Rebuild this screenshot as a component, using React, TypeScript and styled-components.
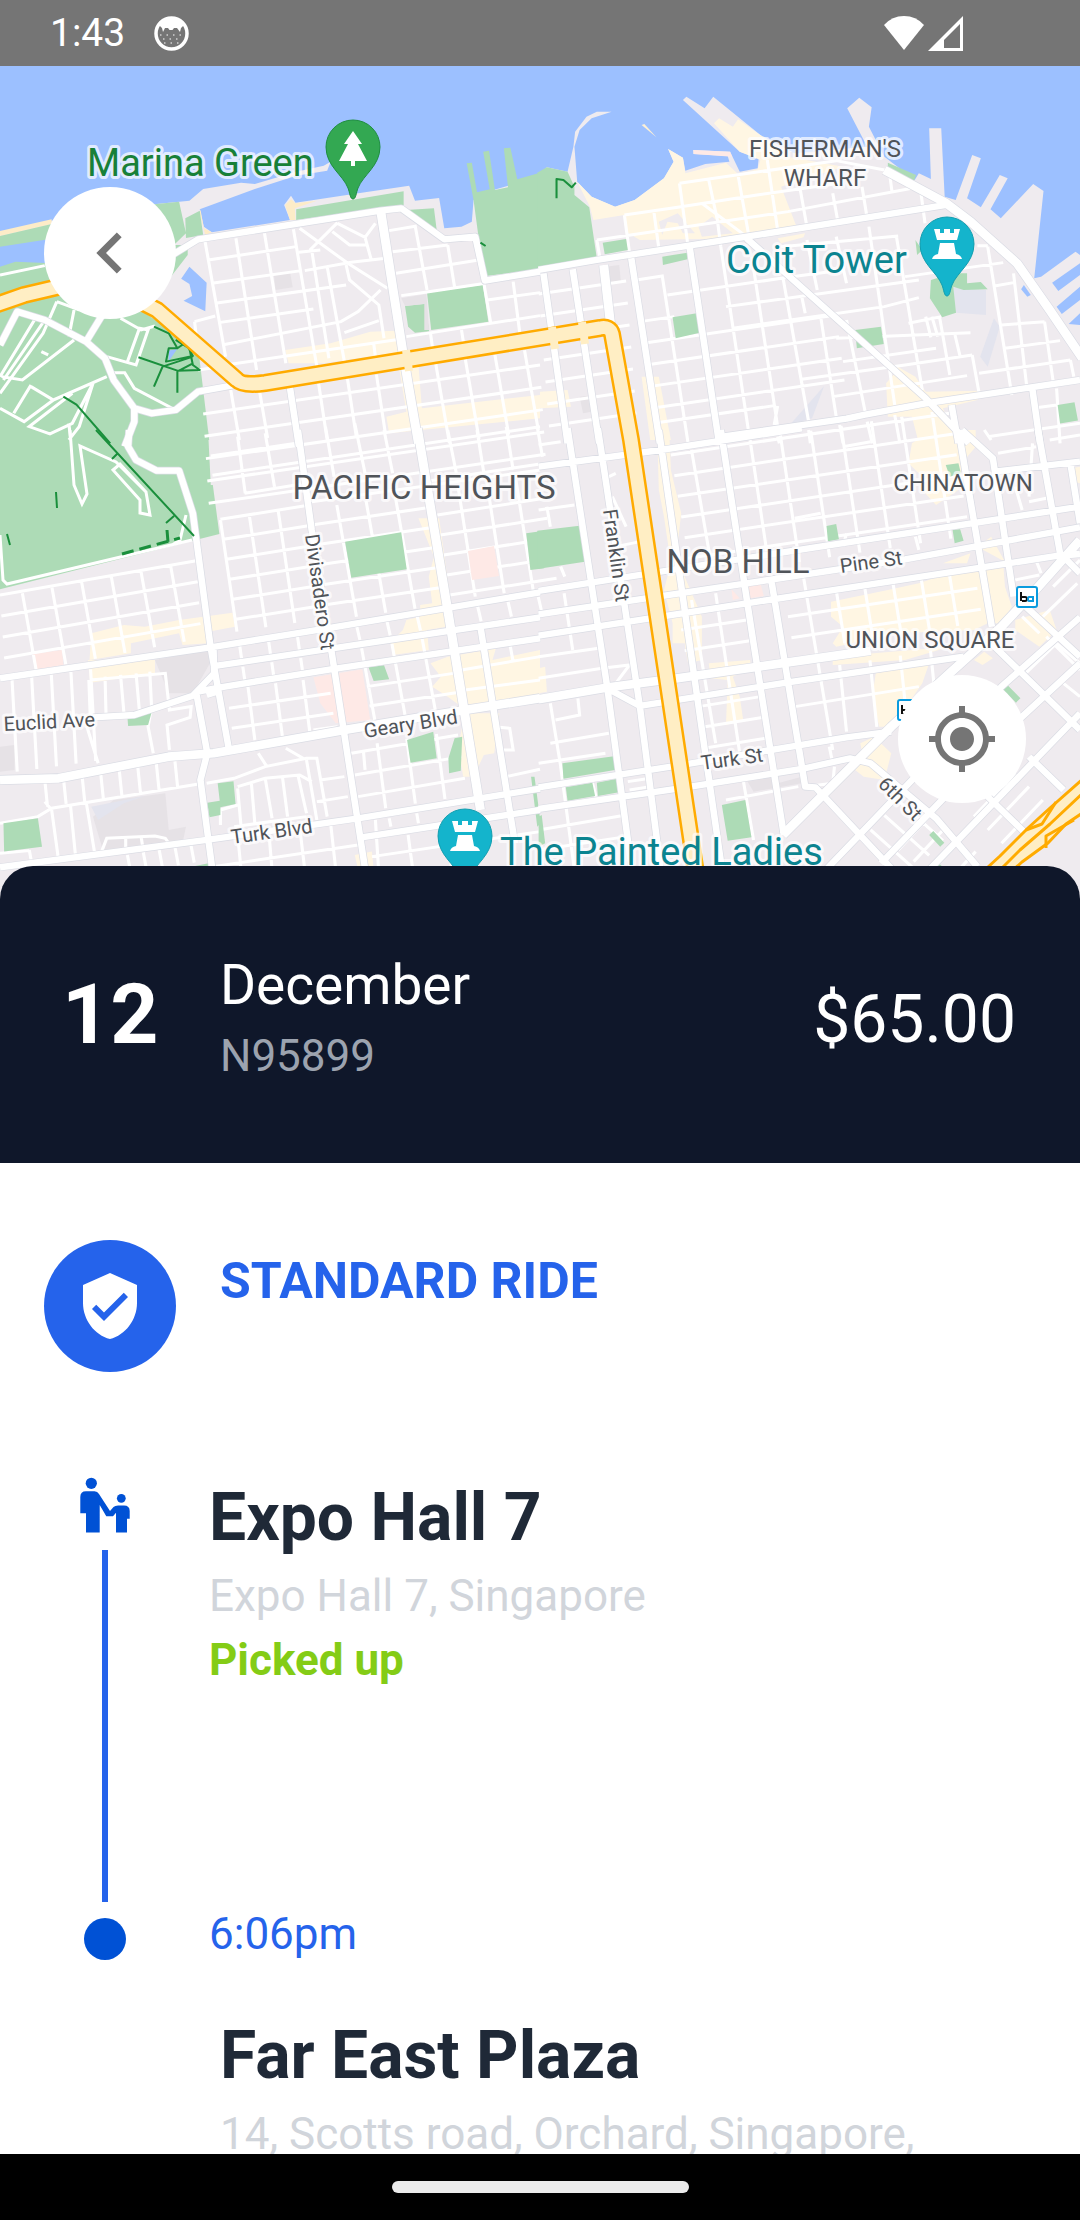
import React from "react";
import styled, { createGlobalStyle } from "styled-components";
import { MdChevronLeft, MdMyLocation, MdVerifiedUser } from "react-icons/md";

const color = {
  navy: "#0f172a",
  blue: "#2563eb",
  marker: "#0051d5",
  ink: "#1f2937",
  muted: "#d1d5db",
  reference: "#9ca3af",
  lime: "#84cc16",
  icon: "#757575",
};

const GlobalStyle = createGlobalStyle`
  *, *::before, *::after { box-sizing: border-box; }
  body { margin: 0; background: #fff; font-family: Roboto, "Noto Sans", sans-serif; }
  h1, h2, p, ol { margin: 0; padding: 0; }
`;

/* ---------- layout ---------- */

const Screen = styled.div`
  display: grid;
  grid-template-rows: auto minmax(0, 1fr) auto;
  height: 100vh;
  overflow: hidden;
`;

const StatusBar = styled.header`
  display: flex;
  align-items: center;
  justify-content: space-between;
  height: 66px;
  padding: 0 116px 0 50px;
  background: ${color.icon};
  color: #fff;
  font-size: 39px;
`;

const StatusGroup = styled.div<{ $gap: number }>`
  display: flex;
  align-items: center;
  gap: ${(p) => p.$gap}px;
`;

const Content = styled.main`
  overflow-y: auto;
  scrollbar-width: none;
`;

const MapPanel = styled.section`
  position: relative;
  aspect-ratio: 1080 / 834;
  overflow: hidden;
  background: #9cc0ff;
`;

const MapDrawing = styled.svg`
  display: block;
  width: 100%;
  height: 100%;
`;

const RoundButton = styled.button<{ $size: number }>`
  position: absolute;
  display: grid;
  place-items: center;
  width: ${(p) => p.$size}px;
  height: ${(p) => p.$size}px;
  padding: 0;
  border: 0;
  border-radius: 50%;
  background: #fff;
  color: ${color.icon};
  cursor: pointer;
`;

const BackButton = styled(RoundButton)`
  top: 121px;
  left: 44px;
`;

const LocateButton = styled(RoundButton)`
  right: 54px;
  bottom: 97px;
`;

const Summary = styled.section`
  position: relative;
  display: flex;
  align-items: flex-start;
  margin-top: -34px;
  padding: 81px 64px 70px 62px;
  border-radius: 33px 33px 0 0;
  background: ${color.navy};
  color: #fff;
`;

const Day = styled.p`
  width: 158px;
  font-size: 84px;
  font-weight: 700;
  line-height: 136px;
`;

const Month = styled.h1`
  font-size: 55px;
  font-weight: 400;
  line-height: 77px;
`;

const Reference = styled.p`
  color: ${color.reference};
  font-size: 44px;
  line-height: 64px;
`;

const Price = styled.p`
  margin-left: auto;
  font-size: 66px;
  line-height: 146px;
`;

const Ride = styled.section`
  display: flex;
  gap: 44px;
  padding: 77px 44px 100px;
`;

const RideBadge = styled.div`
  display: grid;
  place-items: center;
  width: 132px;
  height: 132px;
  border-radius: 50%;
  background: ${color.blue};
  color: #fff;
`;

const RideName = styled.h2`
  color: ${color.blue};
  font-size: 50px;
  font-weight: 700;
  line-height: 82px;
`;

const Timeline = styled.ol`
  list-style: none;
`;

const Stop = styled.li<{ $minHeight?: number }>`
  display: grid;
  grid-template-columns: 66px 1fr;
  gap: 71px;
  min-height: ${(p) => p.$minHeight ?? 0}px;
  padding: 0 44px 0 72px;
`;

const Rail = styled.div`
  display: flex;
  flex-direction: column;
  align-items: center;
  gap: 12px;
  color: ${color.marker};
`;

const RailLine = styled.span`
  flex: 1;
  width: 6px;
  background: ${color.blue};
`;

const RailDot = styled.span`
  width: 42px;
  height: 42px;
  margin-top: 16px;
  border-radius: 50%;
  background: ${color.marker};
`;

const PlaceName = styled.h2`
  color: ${color.ink};
  font-size: 66px;
  font-weight: 700;
  line-height: 92px;
`;

const Line = styled.p<{ $color: string; $bold?: boolean }>`
  color: ${(p) => p.$color};
  font-size: 44px;
  font-weight: ${(p) => (p.$bold ? 700 : 400)};
  line-height: 64px;
`;

const Destination = styled.section`
  padding: 44px 44px 66px 220px;
`;

const NavigationBar = styled.footer`
  display: grid;
  place-items: center;
  height: 66px;
  background: #000;
`;

const HomeHandle = styled.span`
  width: 297px;
  height: 12px;
  border-radius: 6px;
  background: #ebebeb;
`;

/* ---------- map ---------- */

type Segment = [number, number, number, number];

/* Evenly spaced parallel streets, the first at `s`, each next one shifted by (dx, dy). */
const run = (s: Segment, dx: number, dy: number, n: number) =>
  Array.from({ length: n }, (_, i) => {
    const [a, b, c, d] = s;
    return `M${a + dx * i} ${b + dy * i}L${c + dx * i} ${d + dy * i}`;
  }).join("");

interface Area {
  fill: string;
  d: string;
}

interface Tile {
  x: number;
  y: number;
  areas: Area[];
  minor: string;
  major: string;
  wide: string;
  trails?: string;
  /* City squares interrupt the street grid, so they are painted over it. */
  squares?: string;
}

const LAND = "#efebef";
const PARK = "#addbb6";
const SHOP = "#fff6e3";
const CARE = "#fee9e6";
const DIM = "#e6e2e6";
const WATER = "#9cc0ff";

const northWest: Tile = {
  x: 0,
  y: 0,
  areas: [
    {
      fill: LAND,
      d: "M0 700L150 662L455 612L550 602L590 567L700 548L740 552L860 515L940 497L960 485L950 512L860 527L740 567L580 628L592 680L615 697L842 660L825 615L845 587L858 608L1060 577L1188 557L1205 602L1275 594L1290 685L1340 680L1370 665L1375 600L1400 580L1568 530V1400H0Z",
    },
    { fill: "#fdecc8", d: "M0 693L150 658V672L0 708ZM582 628L592 685L615 697L596 706L580 640ZM828 615L845 598L858 610L920 602L856 625L858 660L842 660Z" },
    {
      fill: PARK,
      d: "M0 708L150 672L455 612L520 605L540 700L505 735H545V765L440 905L455 915L575 1040L612 1360H0ZM538 655L580 632L590 705L540 714ZM860 628L1172 574V615L860 660ZM1180 630L1260 625L1268 690L1240 680ZM1355 490L1370 488L1385 577L1422 568L1403 455L1420 452L1437 570L1475 562L1463 445L1482 443L1502 538L1568 518V808L1410 828L1388 700L1375 600ZM1240 878L1402 854L1418 965L1252 990ZM1176 918L1235 911L1246 994L1205 998L1185 980Z",
    },
    { fill: WATER, d: "M0 740L150 716V790L45 785L0 800ZM550 800L600 848L596 934L533 902L558 888L550 852L526 836ZM490 1052L515 1046L490 1084Z" },
    { fill: DIM, d: "M795 822L842 815L850 862L800 870ZM1165 895L1238 882L1246 990H1232V912L1176 918Z" },
    { fill: SHOP, d: "M828 1050L960 1030L1075 995L1150 992L1165 1055L940 1090H838ZM1158 1100L1215 1095L1225 1225L1568 1185V1255L1370 1275L1130 1300L1122 1250L1180 1235Z" },
  ],
  minor:
    "M595 722L655 1070M685 715L745 1110M768 700L830 1090M852 688L920 1100M905 750L955 1075M950 800L1000 1085M870 685L1010 790L1125 865M980 668L900 750M980 670L1060 712L1090 670M965 695L1015 735H1065M1060 712L1078 780M868 757L930 750M1120 775L1020 787L885 812M1005 795L1015 840L1100 915L1115 1015M1105 870L1040 935L990 965L645 1035M1100 962L1000 998M605 780L860 740M615 850L875 812M625 910L1005 855M635 968L910 927M565 965L625 948M565 965L570 1010M1130 692L1210 678M1140 755L1300 735M1150 820L1390 780M1165 887L1240 876L1410 850M1205 675L1240 870M1300 735L1320 862M1405 850L1425 970M1490 845L1510 1005M1415 900L1568 878M1180 1010L1568 947M655 1095L1160 1018M1250 1000L1256 1045M1340 990L1346 1030M1085 1030L1090 1070" +
    run([925, 1150, 950, 1320], 84, -13, 3) +
    run([1265, 1090, 1305, 1330], 86, -13, 4) +
    run([670, 1170, 695, 1320], 82, -6, 2) +
    run([590, 1242, 1568, 1095], 4, 67, 5) +
    "M575 1110L655 1098M0 825L130 797M165 905L125 1000L0 1180M165 905L230 930M215 930L200 1010M130 960L10 1140M100 960L0 1130M5 1130L65 1140L215 1020M120 1055L140 1065M90 1155L40 1240M90 1160L155 1200L310 1130M0 1225L70 1265L155 1200M210 1180L85 1280L145 1302L210 1270L270 1150L230 1280L200 1320M200 1270L205 1320M310 1070L395 1095L430 990L405 985L370 1085M350 955L410 990L450 978M415 930L550 1020M330 1118H362L390 1165L500 1225",
  major:
    "M505 762L575 718L1105 632L1165 625L1290 718L1380 710L1408 842L1568 815M840 1150L868 1340M0 1035L50 935L130 960L250 1025L305 1075L330 1140L390 1225L440 1240L510 1230L575 1175L700 1152M300 940L250 1025M390 1225V1265L362 1340",
  wide: "M1105 630L1175 1090L1215 1330",
  trails:
    "M447 980L490 1000L515 1045L550 1020M515 1045L490 1045L482 1085L560 1068L545 1040M510 1020L550 1045L560 1095L580 1110L515 1112L402 1072M560 1070L472 1100L447 1160M515 1112V1178M520 1112L560 1090M184 1190L222 1214L320 1330M1395 728L1410 738",
};

const northEast: Tile = {
  x: 540,
  y: 0,
  areas: [
    {
      fill: LAND,
      d: "M0 520L20 502L80 515L97 440L102 395L135 350L165 335L208 335L150 355L115 390L100 440L108 545L150 590L218 620L275 600L360 535L388 485L372 447L415 473L422 512L480 492L550 485L545 468L445 462V450L552 455L580 515L632 505L635 475L580 455L415 300L425 290L478 325L503 290L640 405L740 460L950 440L892 325L927 293L963 322L955 380L1000 470L1088 540L1100 520L1135 537L1130 385H1165L1175 590L1207 600L1255 465L1280 475L1240 595L1280 622L1335 525L1358 535L1308 628L1338 655L1432 552L1462 573L1435 835L1455 830L1555 755L1568 765V790L1487 848L1505 873L1568 825V860L1500 920L1515 942L1568 900V940L1535 972L1568 975V1400H0Z",
    },
    { fill: WATER, d: "M1397 868L1405 855L1425 885L1415 890Z" },
    { fill: "#fdf0d6", d: "M295 375L303 372L338 412Z" },
    {
      fill: SHOP,
      d: "M108 545L150 590L218 620L275 600L360 535L388 485L372 447L415 473L422 520L540 488L575 522L632 508L640 480L580 455L505 370L520 355L560 380L575 358L660 420L720 470L880 500L700 560L745 680L600 715L290 720L250 695L245 645L155 660L145 620ZM690 715L770 700L765 712L700 730ZM970 1060L1090 1130L1120 1175L1280 1172L1270 1200L1170 1225L1210 1330H1100L1080 1250L1010 1250L1005 1150L1030 1120ZM295 1130L345 1130L380 1320H320ZM0 1175L80 1170L90 1220L0 1225Z",
    },
    { fill: LAND, d: "M345 665L400 640L450 700H415L400 670L370 665L355 705ZM460 680L500 650L560 700L470 710Z" },
    { fill: CARE, d: "M445 450L552 455L558 470L447 462Z" },
    { fill: PARK, d: "M-8 518L20 502L80 515L100 560V585L143 622L165 775L-8 805ZM1010 488L1092 525L1085 545L1010 508Z" },
    { fill: DIM, d: "M190 800L230 795L235 845L200 850ZM115 1190L140 1187L150 1235L125 1240Z" },
    { fill: "#e3e4ee", d: "M1200 862L1295 870V945L1208 938ZM1318 955L1335 980L1300 1100L1278 1070ZM825 1158L790 1255L725 1275Z" },
  ],
  squares:
    "M182 728L250 717L255 750L188 763ZM355 770L428 758V778L357 795ZM385 952L455 940L464 998L394 1015ZM915 990L990 980L998 1032L920 1045ZM1090 720L1110 750L1095 765ZM1135 840L1200 820L1240 820V850L1280 846L1300 868L1230 870L1200 860L1208 938L1168 952L1132 895ZM1503 1215L1552 1207L1562 1262L1510 1271Z",
  minor:
    "M405 550L860 482L1000 510M245 645L400 622L630 585L880 548M165 720L720 635L1095 562M405 550L430 740M490 540L515 660L525 740M575 525L605 700M660 480L690 690M755 565L775 680M850 580L865 665M935 560L950 655M1015 520L1022 575M1105 570L1118 670M245 645L260 760M330 630L345 745M165 720L175 780M470 610L600 710M1100 570L1165 610M280 840L355 828L430 1330M525 740L605 1290M615 770L690 1280M705 830L780 1265M775 720L805 870M760 890L770 940M815 950L860 1250M860 710L890 850M890 960L945 1240M955 680L1030 1215M1035 710L1110 1170M1120 950L1135 1012M1138 950L1155 1010M1160 950L1190 1125M1205 1005L1220 1070M1255 1065L1275 1180M1300 740L1370 1185M1375 820L1415 1175M1465 965L1490 1145M1540 1080L1550 1130M700 740L1040 708M370 885L720 832L880 810M1060 830L1345 788M540 920L1100 840M560 985L1000 920L1100 893M390 950L290 965M1270 737H1300M1320 858L1375 848M1340 975L1465 965M1350 1045L1510 1022M1275 1120L1540 1080M1070 970L1165 950" +
    run([-4, 882, 250, 843], 5, 66, 7) +
    run([300, 1030, 860, 945], 8, 65, 4) +
    "M860 1015L1250 998M760 1138L1060 1095L1255 1065M850 1190L1240 1127M880 1085L1150 1045M330 1270L680 1217M680 1275L690 1218M1430 1225L1500 1215M1500 1165L1510 1330M690 1310L695 1330M780 1290L785 1330M870 1275L880 1330M950 1265L965 1330M1030 1245L1045 1330",
  major:
    "M-4 810L165 780L600 710L1180 615M10 820L80 1330M95 808L172 1330M435 745L520 1330M265 775L348 1330M530 1310L890 1256L940 1245L1120 1210L1568 1140M1430 1170L1452 1330M1195 1215L1215 1330M600 715L1120 1195L1245 1330",
  wide: "M185 795L205 975M1000 510L1180 610L1250 665L1385 790L1480 930L1575 1075",
  trails: "M48 595V537L68 540L92 562L104 548",
};

const southWest: Tile = {
  x: 0,
  y: 430,
  areas: [
    { fill: LAND, d: "M0 30H1572V1420H0Z" },
    { fill: PARK, d: "M0 0L604 0L612 165H618L637 312L0 478ZM1542 1040H1552L1570 1180L1560 1190ZM560 1310L605 1300V1330H560Z" },
    {
      fill: SHOP,
      d: "M265 610L360 585L420 590L520 570L675 548L682 590L605 605V640L530 645L520 610L380 640V670L260 690ZM255 690L450 690V730L262 758ZM1215 265H1275L1310 520L1295 590L1240 600L1245 660L1140 675L1135 635L1170 600L1180 570L1220 560V525L1255 520L1245 440L1260 380ZM1250 700L1300 680L1360 670L1440 655L1430 690L1568 660V800L1340 830L1300 800L1255 770L1280 740ZM1350 850H1450L1435 970L1405 975L1375 1040H1345L1330 950ZM1030 1275L1080 1265L1085 1320H1040Z",
    },
    { fill: CARE, d: "M96 672L180 660L184 705L105 718ZM910 742L1052 718L1075 870L975 880L930 820Z" },
    { fill: DIM, d: "M450 690L615 655V690L560 790L490 790ZM270 1160L330 1110L480 1090L490 1200L540 1190L530 1240L300 1265ZM0 950L42 945V1020L0 1025Z" },
    { fill: "#e3e4ee", d: "M265 1130L420 1098L360 1120L285 1170Z" },
  ],
  squares:
    "M1002 335L1165 307L1181 418L1020 443ZM1528 310L1580 302V415L1540 420ZM370 862L440 848L430 885L372 888ZM632 1060L678 1054L684 1122L640 1132V1155L608 1162L602 1118L638 1112ZM10 1180L110 1165L122 1250L12 1265ZM1070 712L1115 706L1130 748L1085 753ZM1182 930L1258 905L1268 985L1192 998ZM1320 925L1342 920L1338 1022L1304 1030L1302 985Z",
  minor:
    run([612, 78, 870, 38], 5, 58, 2) +
    "M710 190L890 160M690 20L712 190M770 10L797 170M945 -10L970 140M1030 -20L1060 130M1115 0L1140 130M1300 0L1325 130M1385 0L1405 130M1470 -10L1490 120M1560 -10L1575 80M880 95L1568 -10M1230 155L1568 102M905 215L1568 120" +
    run([640, 268, 900, 225], 9, 60, 6) +
    run([905, 285, 1260, 230], 9, 60, 5) +
    run([1270, 255, 1580, 205], 9, 60, 5) +
    run([640, 270, 688, 605], 84, -13, 3) +
    run([978, 225, 1035, 560], 85, -12, 3) +
    run([1330, 170, 1380, 500], 84, -10, 3) +
    run([0, 495, 570, 392], 4, 63, 4) +
    run([65, 490, 105, 720], 86, -17, 6) +
    run([695, 640, 702, 690], 84, -13, 3) +
    run([1035, 585, 1045, 630], 88, -14, 7) +
    run([705, 710, 712, 760], 84, -13, 3) +
    run([1050, 655, 1090, 880], 88, -14, 3) +
    run([665, 835, 960, 790], 8, 60, 2) +
    run([720, 770, 740, 930], 80, -10, 3) +
    run([1065, 770, 1330, 728], 8, 58, 2) +
    "M1340 720L1568 680M1350 780L1568 750M1480 640L1490 695" +
    run([35, 750, 50, 1025], 57, -8, 5) +
    "M258 750L262 860M305 740L308 860M350 735L360 850M395 730L405 845M435 725L440 830M262 750L480 730L492 840L555 830L552 862L485 885L492 960M440 830L430 890L445 970M245 865L285 1000" +
    run([130, 1050, 138, 1130], 54, -8, 8) +
    "M0 1180L110 1160L150 1135L590 1060M130 1115L150 1140M150 1140L170 1290M205 1130L220 1285M250 1115L275 1270M85 1260L92 1300M0 1270L85 1262M295 1265L310 1225L450 1218L480 1225L490 1240M365 1225V1260M410 1222L415 1255M600 1060L680 1045L770 1010L890 985L920 985L950 1160M750 970L775 1010M830 955L880 985M690 1070L770 1045L870 1035L905 1055M690 1075L700 1190M730 1060L740 1180M770 1045L790 1165M820 1040L835 1160M865 1035L890 1150M890 990L920 1170M640 1185V1140L690 1125M930 1050L1000 1040M920 1115L1010 1100M680 1190L890 1160M910 900L980 890" +
    run([1020, 970, 1330, 915], 10, 65, 4) +
    "M1055 960L1060 1020" +
    run([1095, 940, 1120, 1135], 86, -14, 3) +
    "M1440 960L1490 960L1480 895L1450 892M1470 1040L1568 1018M690 1215L700 1320M780 1200L790 1320M870 1190L885 1320M960 1180L975 1320M620 1310L1040 1245M1090 1170L1100 1330M1130 1165L1135 1190M1210 1150L1215 1180M1080 1280L1568 1205M1185 1215L1200 1330M1310 1240V1330" +
    run([370, 1275, 380, 1330], 46, -8, 5),
  major:
    "M0 745L625 650L950 595L1568 487M625 708L1568 562M575 785L640 772L960 718L1568 625M270 862L390 855L560 797L622 730L620 660M0 1312L600 1230L1040 1165L1568 1076M1050 1222L1568 1140M865 0L905 300L965 680L1062 1330M375 0L372 50L395 90L455 122L520 122L560 250L612 655L665 960M570 790L602 970L582 1050L618 1330M1395 590L1495 1240M600 795L630 785",
  wide: "M0 1050L170 1045L490 980L620 970L1000 900L1350 840L1568 805M1212 -5L1300 540L1395 1140",
};

const southEast: Tile = {
  x: 540,
  y: 430,
  areas: [
    { fill: LAND, d: "M0 30H1580V1420H0Z" },
    {
      fill: SHOP,
      d: "M1080 40L1110 20L1215 0L1265 0V50L1225 100L1215 180L1150 225L1110 180L1120 150L1070 100ZM340 0H375L380 120L410 250L400 340L420 440L470 560V690L430 700L420 640L385 640V580L360 480L380 400L360 260L345 180ZM845 515L1010 480L1100 460L1200 425L1345 400L1350 470L1370 530L1340 580L1300 580L1260 600L1040 610L860 650L850 640L880 590L845 560ZM850 680L1190 650L1060 690L850 705ZM1380 570L1480 540L1500 600L1450 650L1380 600ZM1260 690L1290 665L1315 685L1285 705ZM490 700L610 690L612 710L560 740L580 800L590 870L540 885L545 750L495 745ZM975 730L1130 700L1110 760L1070 820L1020 890H985L965 800ZM930 940L970 920L1020 970L1000 1050L940 1040L915 1020L940 990ZM1270 350L1310 320L1350 395ZM1170 400L1250 370L1240 400ZM-4 715L15 710L20 785L-4 790ZM1545 115L1568 110V160L1548 155Z",
    },
    { fill: CARE, d: "M600 468L640 460L650 498L608 505ZM556 478L580 505L560 510Z" },
    { fill: DIM, d: "M600 1050L680 1040L690 1060L760 1040V1060L620 1085Z" },
  ],
  squares:
    "M-8 302L115 287L130 395L-8 417ZM832 288L860 282L868 328L836 334ZM1178 105L1215 100L1222 130L1190 140ZM1198 300L1220 298L1230 332L1204 340ZM65 1000L220 978L230 1018L68 1046ZM75 1072L152 1058L160 1098L80 1112ZM165 1058L232 1045L238 1085L168 1098ZM528 1125L596 1110L614 1222L545 1232ZM-4 1160L5 1155L15 1240L-4 1250ZM1338 770L1352 760L1395 805L1382 818ZM1130 1215L1142 1203L1174 1238L1162 1250ZM1140 1300L1165 1305V1330H1140Z",
  minor:
    "M-4 45L60 35" +
    run([380, 75, 1190, -50], 10, 62, 6) +
    "M440 60L495 390" +
    run([610, 30, 665, 410], 88, -14, 7) +
    "M440 510L510 940M510 490L580 970M765 440L850 960" +
    run([860, 480, 885, 640], 82, -13, 5) +
    run([870, 705, 890, 905], 88, -14, 4) +
    run([720, 560, 1270, 475], 10, 63, 2) +
    run([410, 600, 600, 570], 10, 62, 2) +
    "M740 830L1100 770" +
    run([460, 830, 640, 800], 10, 62, 3) +
    "M-4 745L180 715L260 705L220 760M-4 680L170 655M30 940L200 910M30 820L65 1040M110 805L115 855L45 870M-4 1000L190 970M60 1010L100 1320M150 1050L165 1110M255 1055L320 1045M260 1080L320 1070M-4 1200L250 1155M-4 1260L250 1220M540 1110L750 1070M590 1050L620 1230M855 1010L850 1060L770 1070M840 950L850 1000M70 490L95 660M60 410L72 440M20 230L30 290M-4 240L100 225M210 200L250 290M220 350L290 335M220 130L180 150M1300 20L1568 -20M1330 70L1440 50M1290 0L1310 30M1380 170L1400 240M1420 215L1470 205M1430 40L1420 200M1480 30L1568 15M1380 450L1450 435M1440 390L1455 430M880 50L960 35M740 265L815 250M880 350L890 310M1090 320L1100 360" +
    "M1400 560L1450 610M1430 545L1475 590M1470 620L1568 720M1450 680L1500 620M1490 470L1568 390M1400 740L1480 660M1460 560L1560 460M1520 760L1568 800M1440 700L1500 640L1568 700" +
    run([1040, 1260, 1130, 1160], 45, 35, 4) +
    run([1260, 1160, 1380, 1030], 40, 40, 4) +
    run([960, 1200, 1090, 1320], 40, -44, 3) +
    "M870 1280L940 1210",
  major:
    "M-4 110L350 60L760 -5M-4 483L780 355L1568 230M1320 125L1568 95M-4 553L600 460L1060 388L1568 292M-4 617L600 520L1500 378L1568 372M290 828L720 757L1230 680M-4 1072L430 1002L890 922L1020 905M-4 1137L400 1076L760 1017L900 985L960 1000L1150 1165L1270 1310M80 -5L195 770L268 1330M168 -5L290 830L352 1330M345 0L530 1330M525 0L620 640L708 1215M670 440L770 1070L800 1072L1020 1315M1215 0L1312 590M1225 0L1315 85L1375 500M1445 -5L1510 370L1568 430M1540 100L1568 280M200 778L290 828M1568 562L1340 770L830 1320M1568 700L1400 860L990 1300M1568 850L1130 1320M1310 640L1568 900M1400 520L1568 680M1420 980L1520 1080M1300 1100L1420 1220",
  wide: "M-4 808L200 772L400 745L960 662M1568 330L1430 490L1340 590L1200 720L1020 890L705 1215",
};

const tiles = [northWest, northEast, southWest, southEast];
const tileTransform = (t: Tile) => `translate(${t.x} ${t.y}) scale(.3444 .3333)`;

const HIGHWAY = "M-5 305L24 295L58 287L110 286L157 310L237 380Q243 386 265 383L405 360L600 328Q610 326 612 334L631 440L700 900";

const Highway = () => (
  <g fill="none" strokeLinejoin="round">
    <path d={HIGHWAY} stroke="#ffab00" strokeWidth="18" />
    <path d={HIGHWAY} stroke="#ffeec4" strokeWidth="13" />
    <path
      d="M976 878L1000 856L1028 828L1050 808L1084 778V812L1066 824L1048 843L1022 862L1002 880Z"
      fill="#ffeec4"
      stroke="#ffab00"
      strokeWidth="3"
    />
    <path
      d="M990 880L1020 850L1050 824L1084 792M1026 830L1042 824L1056 802M1046 848V836L1074 820"
      stroke="#ffab00"
      strokeWidth="3"
    />
    <path d="M406 350L409 371M552 327L555 349M582 322L585 344" stroke="#ffeec4" strokeWidth="8" />
  </g>
);

/* Footpaths in the western park. */
const ParkTrails = () => (
  <g fill="none" stroke="#1a8f3c" strokeWidth="2">
    <path
      d="M0 535L3 580L7 584L192 540M70 430L74 485L82 504L87 494L80 446L116 462L146 492L150 515L140 513V500L113 470L120 464L146 492M186 515L180 540L172 545"
      stroke="#fff"
      strokeWidth="3"
    />
    <path d="M96 430L194 536M112 459L118 453M166 523L174 516M56 492L57 508M7 534L10 545" />
    <path d="M122 554L180 538M167 530L168 542" strokeWidth="3" strokeDasharray="12 6" />
  </g>
);

interface LabelProps {
  x: number;
  y: number;
  size: number;
  fill?: string;
  rotate?: number;
  middle?: boolean;
  children: string;
}

const Label = ({ x, y, size, fill = "#505459", rotate = 0, middle, children }: LabelProps) => (
  <text
    x={x}
    y={y}
    fontSize={size}
    fill={fill}
    textAnchor={middle ? "middle" : "start"}
    transform={rotate ? `rotate(${rotate} ${x} ${y})` : undefined}
    stroke="#fff"
    strokeOpacity=".7"
    strokeWidth="6"
    strokeLinejoin="round"
    paintOrder="stroke"
  >
    {children}
  </text>
);

const Pin = ({ x, y, kind }: { x: number; y: number; kind: "tree" | "tower" }) => {
  const tree = kind === "tree";
  return (
    <g transform={`translate(${x} ${y})`}>
      <path
        d="M0 52C-3 52-3 46-5 41C-10 28-27 19-27 0A27 27 0 0 1 27 0C27 19 10 28 5 41C3 46 3 52 0 52Z"
        fill={tree ? "#33a852" : "#14b4cc"}
        stroke={tree ? "#1e8e3e" : "#129eaf"}
        strokeWidth="1"
      />
      {tree ? (
        <path fill="#fff" d="M0-16L9-3H5L14 14H2V19H-2V14H-14L-5-3H-9Z" />
      ) : (
        <path fill="#fff" d="M-13-15H-7V-11H-3V-15H3V-11H7V-15H13L10-4H-10ZM-7-1H7L9 10Q14 11 15 15H-15Q-14 11-9 10Z" />
      )}
    </g>
  );
};

const Station = ({ x, y }: { x: number; y: number }) => (
  <g transform={`translate(${x} ${y})`}>
    <rect x="-10" y="-10" width="20" height="20" rx="2" fill="#fff" stroke="#0a9bde" strokeWidth="2" />
    <path d="M-6-5V4M-5 0H-2Q0 0 0 2Q0 4-2 4H-5" fill="none" stroke="#111" strokeWidth="2" />
    <path d="M6 0H2Q1 0 1 2Q1 4 2 4H6Z" fill="none" stroke="#0a9bde" strokeWidth="2" />
  </g>
);

const CityMap = () => (
  <MapDrawing viewBox="0 66 1080 834" preserveAspectRatio="xMidYMin slice" role="img" aria-label="Map of San Francisco">
    {tiles.map((t, i) => (
      <g key={i} transform={tileTransform(t)}>
        {t.areas.map((a, j) => (
          <path key={j} fill={a.fill} d={a.d} />
        ))}
      </g>
    ))}
    {tiles.map((t, i) => (
      <g key={i} transform={tileTransform(t)} fill="none" stroke="#fff" strokeWidth="9">
        <path d={t.minor} />
        {t.squares && <path d={t.squares} fill={PARK} stroke="none" />}
      </g>
    ))}
    <path d="M468 551L494 546L499 576L472 580Z" fill={CARE} />
    {tiles.map((t, i) => (
      <g key={i} transform={tileTransform(t)} fill="none" stroke="#dadce4" strokeLinejoin="round">
        <path d={t.major} strokeWidth="23" />
        <path d={t.wide} strokeWidth="30" />
      </g>
    ))}
    {tiles.map((t, i) => (
      <g key={i} transform={tileTransform(t)} fill="none" stroke="#fff" strokeLinejoin="round">
        <path d={t.major} strokeWidth="19" />
        <path d={t.wide} strokeWidth="26" />
        {t.trails && <path d={t.trails} stroke="#1a8f3c" strokeWidth="6" />}
      </g>
    ))}
    <ParkTrails />
    <Highway />
    <Station x={1027} y={597} />
    <Station x={908} y={710} />
    <Label x={87} y={176} size={38} fill="#188038">Marina Green</Label>
    <Label x={726} y={273} size={38} fill="#0b8490">Coit Tower</Label>
    <Label x={500} y={865} size={38} fill="#0b8490">The Painted Ladies</Label>
    <Label x={825} y={157} size={24} middle>FISHERMAN'S</Label>
    <Label x={825} y={186} size={24} middle>WHARF</Label>
    <Label x={424} y={499} size={33} middle>PACIFIC HEIGHTS</Label>
    <Label x={738} y={573} size={33} middle>NOB HILL</Label>
    <Label x={963} y={491} size={24} middle>CHINATOWN</Label>
    <Label x={930} y={648} size={24} middle>UNION SQUARE</Label>
    <Label x={305} y={535} size={20} rotate={82}>Divisadero St</Label>
    <Label x={603} y={510} size={20} rotate={82}>Franklin St</Label>
    <Label x={841} y={573} size={20} rotate={-8}>Pine St</Label>
    <Label x={4} y={731} size={20} rotate={-3}>Euclid Ave</Label>
    <Label x={365} y={738} size={20} rotate={-9}>Geary Blvd</Label>
    <Label x={232} y={844} size={20} rotate={-8}>Turk Blvd</Label>
    <Label x={702} y={770} size={20} rotate={-8}>Turk St</Label>
    <Label x={877} y={785} size={20} rotate={45}>6th St</Label>
    <Pin x={353} y={147} kind="tree" />
    <Pin x={947} y={244} kind="tower" />
    <Pin x={465} y={836} kind="tower" />
  </MapDrawing>
);

/* ---------- icons ---------- */

const AdultAndChildIcon = () => (
  <svg width="66" height="66" viewBox="0 0 66 66" fill="currentColor" aria-hidden="true">
    <circle cx="19.300" cy="11.300" r="5.600" />
    <circle cx="49.300" cy="26.300" r="4.400" />
    <path d="M14 19.300H22.500Q25.500 19.300 27 22L38 39L41.500 35Q43 33.500 46 33.500H52Q57.700 33.500 57.700 39V46.700H55V60.500H44V40.700L41 44.300H34.300L27.700 33V60.500H14V41.300H8.300V25Q8.300 19.300 14 19.300Z" />
  </svg>
);

const NotificationIcon = () => (
  <svg width="35" height="35" viewBox="0 0 35 35" aria-hidden="true">
    <circle cx="17.500" cy="17.500" r="15.500" fill="none" stroke="#fff" strokeWidth="3.500" />
    <path
      fill="#fff"
      d="M5 9Q9 2 17.500 2Q26 2 30 9L27 12L26 16L23 12H20L18.500 14H15.500L14 12H11L9 16L8 12Z"
    />
    <path
      fill="none"
      stroke="#fff"
      strokeWidth="1.200"
      strokeDasharray="1.500 5"
      d="M6 19H29M9 23H28M10 27H26"
    />
  </svg>
);

const WifiIcon = () => (
  <svg width="42" height="36" viewBox="0 0 42 36" aria-hidden="true">
    <path fill="#fff" d="M21 35L1 10Q9 1 21 1Q33 1 41 10Z" />
  </svg>
);

const SignalIcon = () => (
  <svg width="36" height="36" viewBox="0 0 36 36" aria-hidden="true">
    <path fill="#fff" fillRule="evenodd" d="M35 1V36H0ZM32 9L16 25V33H32Z" />
  </svg>
);

export default function App() {
  return (
    <>
      <GlobalStyle />
      <Screen>
        <StatusBar>
          <StatusGroup $gap={29}>
            <time>1:43</time>
            <NotificationIcon />
          </StatusGroup>
          <StatusGroup $gap={3}>
            <WifiIcon />
            <SignalIcon />
          </StatusGroup>
        </StatusBar>
        <Content>
          <MapPanel>
            <CityMap />
            <BackButton type="button" aria-label="Back" $size={132}>
              <MdChevronLeft size={82} />
            </BackButton>
            <LocateButton type="button" aria-label="Show my location" $size={128}>
              <MdMyLocation size={72} />
            </LocateButton>
          </MapPanel>
          <Summary>
            <Day>12</Day>
            <div>
              <Month>December</Month>
              <Reference>N95899</Reference>
            </div>
            <Price>$65.00</Price>
          </Summary>
          <Ride>
            <RideBadge>
              <MdVerifiedUser size={72} />
            </RideBadge>
            <RideName>STANDARD RIDE</RideName>
          </Ride>
          <Timeline>
            <Stop $minHeight={430}>
              <Rail>
                <AdultAndChildIcon />
                <RailLine />
              </Rail>
              <div>
                <PlaceName>Expo Hall 7</PlaceName>
                <Line $color={color.muted}>Expo Hall 7, Singapore</Line>
                <Line $color={color.lime} $bold>Picked up</Line>
              </div>
            </Stop>
            <Stop>
              <Rail>
                <RailDot />
              </Rail>
              <Line $color={color.blue}>6:06pm</Line>
            </Stop>
          </Timeline>
          <Destination>
            <PlaceName>Far East Plaza</PlaceName>
            <Line $color={color.muted}>14, Scotts road, Orchard, Singapore,</Line>
          </Destination>
        </Content>
        <NavigationBar>
          <HomeHandle />
        </NavigationBar>
      </Screen>
    </>
  );
}
